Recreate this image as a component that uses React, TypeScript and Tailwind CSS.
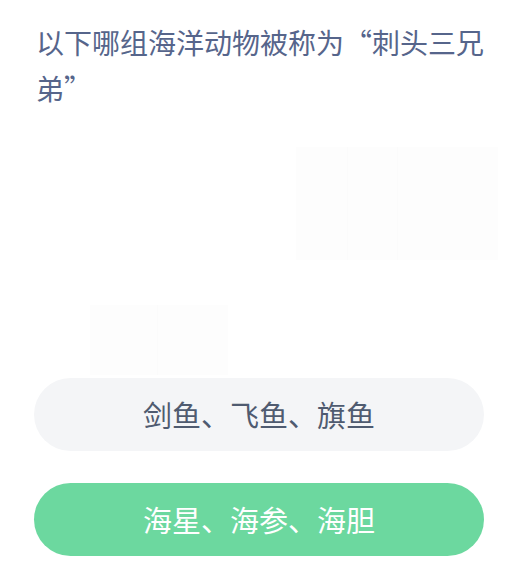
import React from 'react';

const FONT = "font-['Noto_Sans_CJK_SC','Noto_Sans',sans-serif]";

const options = [
  { label: '剑鱼、飞鱼、旗鱼', correct: false },
  { label: '海星、海参、海胆', correct: true },
];

export default function App() {
  return (
    <div className={`w-[512px] h-[583px] bg-white overflow-hidden ${FONT}`}>
      {/* Question */}
      <div className="pl-[36px] pr-[20px] pt-[19px]">
        <p className="text-[28px] leading-[46px] text-[#56658b]">
          以下哪组海洋动物被称为“刺头三兄弟”
        </p>
      </div>

      {/* Faded background art */}
      <div className="h-[267px] flex flex-col">
        <div className="flex justify-end pr-[14px] pt-[36px]">
          <div className="w-[52px] h-[113px] bg-[#fdfdfd] border-r border-[#fbfbfb]" />
          <div className="w-[50px] h-[113px] bg-[#fdfdfd] border-r border-[#fbfbfb]" />
          <div className="w-[100px] h-[113px] bg-[#fdfdfd]" />
        </div>
        <div className="flex pl-[90px] pt-[45px]">
          <div className="w-[68px] h-[70px] bg-[#fdfdfd] border-r border-[#fbfbfb]" />
          <div className="w-[70px] h-[70px] bg-[#fdfdfd]" />
        </div>
      </div>

      {/* Options */}
      <div className="flex flex-col gap-[32px] pl-[34px] pr-[28px]">
        {options.map((o) => (
          <button
            key={o.label}
            className={`h-[73px] w-full rounded-full flex items-center justify-center text-[29px] ${
              o.correct ? 'bg-[#6cd89f] text-white' : 'bg-[#f4f5f7] text-[#4f5b70]'
            }`}
          >
            {o.label}
          </button>
        ))}
      </div>
    </div>
  );
}
